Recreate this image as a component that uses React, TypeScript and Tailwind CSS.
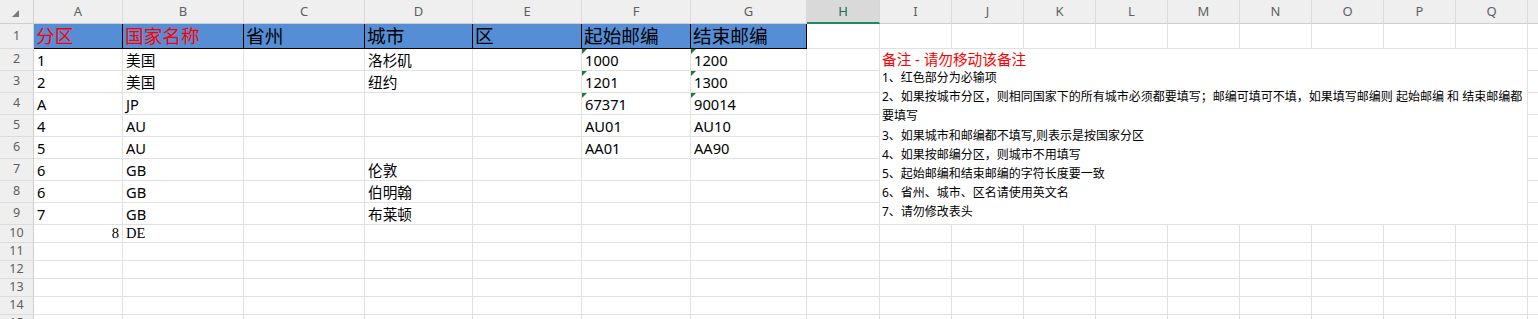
import React from 'react';

const COLS = ['A', 'B', 'C', 'D', 'E', 'F', 'G', 'H', 'I', 'J', 'K', 'L', 'M', 'N', 'O', 'P', 'Q', 'R'];

// row 1 (header of the template)
const HEADERS = [
    { text: '分区', red: true },
    { text: '国家名称', red: true },
    { text: '省州', red: false },
    { text: '城市', red: false },
    { text: '区', red: false },
    { text: '起始邮编', red: false },
    { text: '结束邮编', red: false },
];

// rows 2 - 9, columns A - G
const DATA: string[][] = [
    ['1', '美国', '', '洛杉矶', '', '1000', '1200'],
    ['2', '美国', '', '纽约', '', '1201', '1300'],
    ['A', 'JP', '', '', '', '67371', '90014'],
    ['4', 'AU', '', '', '', 'AU01', 'AU10'],
    ['5', 'AU', '', '', '', 'AA01', 'AA90'],
    ['6', 'GB', '', '伦敦', '', '', ''],
    ['6', 'GB', '', '伯明翰', '', '', ''],
    ['7', 'GB', '', '布莱顿', '', '', ''],
];

const NOTES = [
    '1、红色部分为必输项',
    '2、如果按城市分区，则相同国家下的所有城市必须都要填写；邮编可填可不填，如果填写邮编则 起始邮编 和 结束邮编都',
    '要填写',
    '3、如果城市和邮编都不填写,则表示是按国家分区',
    '4、如果按邮编分区，则城市不用填写',
    '5、起始邮编和结束邮编的字符长度要一致',
    '6、省州、城市、区名请使用英文名',
    '7、请勿修改表头',
];

const sans = "font-['Noto_Sans','Noto_Sans_CJK_SC',sans-serif]";

const GreenFlag: React.FC = () => (
    <svg className="absolute left-0 top-0" width="5" height="5" viewBox="0 0 5 5">
        <polygon points="0,0 5,0 0,5" fill="#1d7a34" />
    </svg>
);

const RowHead: React.FC<{ n: number }> = ({ n }) => (
    <div className="flex items-center justify-center border-r border-b border-r-[#cfcfcf] border-b-[#dcdcdc] bg-[#efefef] text-[12.5px] text-[#5f5f5f]">
        {n}
    </div>
);

const Empty: React.FC = () => <div className="border-r border-b border-[#e1e1e1] bg-white" />;

export default function App() {
    const rows: React.ReactNode[] = [];

    // column header strip
    rows.push(
        <div key="corner" className="flex items-end justify-end border-r border-b border-r-[#cfcfcf] border-b-[#d0d0d0] bg-[#efefef] pb-[6px] pr-[14px]">
            <svg width="7" height="7" viewBox="0 0 7 7">
                <polygon points="7,0 7,7 0,7" fill="#7b7b7b" />
            </svg>
        </div>
    );
    COLS.forEach((c) => {
        const active = c === 'H';
        rows.push(
            <div
                key={'h' + c}
                className={
                    active
                        ? 'flex items-center justify-center border-r border-r-[#d6d6d6] border-b-2 border-b-[#1f8a60] bg-[#d9d9d9] pt-[1px] text-[13px] text-[#1c6b55]'
                        : 'flex items-center justify-center border-r border-b border-r-[#dadada] border-b-[#d0d0d0] bg-[#efefef] text-[13px] text-[#5f5f5f]'
                }
            >
                {c}
            </div>
        );
    });

    // row 1
    rows.push(<RowHead key="r1" n={1} />);
    HEADERS.forEach((h, i) => {
        rows.push(
            <div
                key={'t' + i}
                className={`flex items-center overflow-hidden whitespace-nowrap border-r border-b border-black bg-[#558ed5] pl-[2px] pt-[1px] text-[18.67px] leading-none ${h.red ? 'text-[#ff0000]' : 'text-black'}`}
            >
                {h.text}
            </div>
        );
    });
    COLS.slice(7).forEach((c) => rows.push(<Empty key={'e1' + c} />));

    // rows 2 - 9
    DATA.forEach((r, ri) => {
        const n = ri + 2;
        rows.push(<RowHead key={'r' + n} n={n} />);
        r.forEach((v, ci) => {
            const flag = (ci === 5 || ci === 6) && ri < 3;
            rows.push(
                <div
                    key={`c${n}-${ci}`}
                    className="relative flex items-center overflow-hidden whitespace-nowrap border-r border-b border-[#e1e1e1] bg-white pl-[3px] pt-[1px] text-[14.67px] text-black"
                >
                    {flag && <GreenFlag />}
                    {v}
                </div>
            );
        });
        // H and R, I..Q are covered by the note
        rows.push(<Empty key={'e' + n + 'H'} />);
        rows.push(<Empty key={'e' + n + 'R'} />);
    });

    // row 10
    rows.push(<RowHead key="r10" n={10} />);
    rows.push(
        <div key="c10a" className="flex items-end justify-end border-r border-b border-[#e1e1e1] bg-white pb-[2px] pr-[3px] font-['Liberation_Serif',serif] text-[14.5px] leading-none text-black">
            8
        </div>
    );
    rows.push(
        <div key="c10b" className="flex items-end border-r border-b border-[#e1e1e1] bg-white pb-[2px] pl-[3px] font-['Liberation_Serif',serif] text-[14.5px] leading-none text-black">
            DE
        </div>
    );
    COLS.slice(2).forEach((c) => rows.push(<Empty key={'e10' + c} />));

    // rows 11 - 15
    [11, 12, 13, 14, 15].forEach((n) => {
        rows.push(<RowHead key={'r' + n} n={n} />);
        COLS.forEach((c) => rows.push(<Empty key={'e' + n + c} />));
    });

    return (
        <div className={`h-[319px] w-[1538px] overflow-hidden bg-white ${sans}`}>
            <div className="grid w-max grid-cols-[34px_89px_121px_121px_108px_109px_109px_116px_73px_72px_72px_72px_72px_72px_72px_72px_72px_72px_72px] grid-rows-[24px_25px_repeat(8,22px)_repeat(6,18px)]">
                {rows}
                {/* merged note cell I2:Q9 */}
                <div className="col-start-10 col-span-9 row-start-3 row-span-8 flex flex-col overflow-hidden border-r border-b border-[#e1e1e1] bg-white pl-[2px] pt-[1px]">
                    <div className="whitespace-nowrap text-[14.67px] leading-[18px] text-[#ff0000]">备注 - 请勿移动该备注</div>
                    {NOTES.map((t, i) => (
                        <div key={i} className="whitespace-nowrap text-[12px] leading-[19.2px] text-black">
                            {t}
                        </div>
                    ))}
                </div>
            </div>
        </div>
    );
}
